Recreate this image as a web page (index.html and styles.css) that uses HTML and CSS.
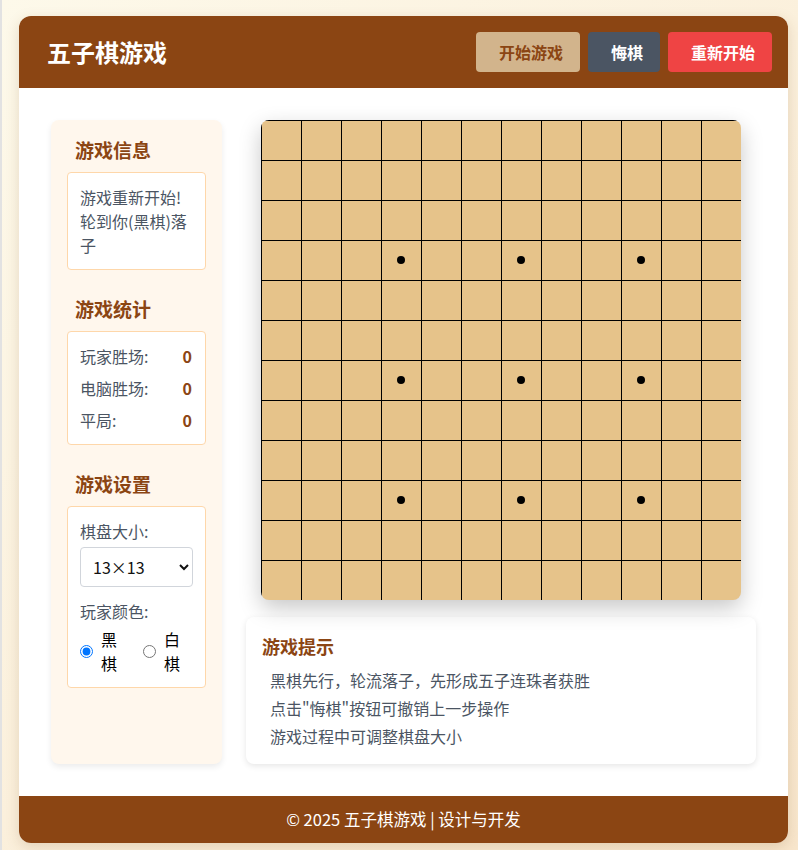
FILE: index.html
```html
<!DOCTYPE html>
<html lang="zh-CN">
<head>
<meta charset="utf-8">
<title>五子棋游戏</title>
<link rel="stylesheet" href="styles.css">
</head>
<body>
<div class="app">
  <header class="header">
    <h1 class="title">五子棋游戏</h1>
    <div class="actions">
      <button class="btn btn-start">开始游戏</button>
      <button class="btn btn-undo">悔棋</button>
      <button class="btn btn-restart">重新开始</button>
    </div>
  </header>
  <main class="main">
    <aside class="sidebar">
      <section class="section">
        <h2 class="section-title">游戏信息</h2>
        <div class="box info">游戏重新开始! 轮到你(黑棋)落子</div>
      </section>
      <section class="section">
        <h2 class="section-title">游戏统计</h2>
        <div class="box stats">
          <div class="stat"><span>玩家胜场:</span><b>0</b></div>
          <div class="stat"><span>电脑胜场:</span><b>0</b></div>
          <div class="stat"><span>平局:</span><b>0</b></div>
        </div>
      </section>
      <section class="section">
        <h2 class="section-title">游戏设置</h2>
        <div class="box settings">
          <label class="field-label">棋盘大小:</label>
          <select class="select">
            <option>13×13</option>
          </select>
          <label class="field-label color-label">玩家颜色:</label>
          <div class="radios">
            <label class="radio"><input type="radio" name="c" checked><span>黑棋</span></label>
            <label class="radio"><input type="radio" name="c"><span>白棋</span></label>
          </div>
        </div>
      </section>
    </aside>
    <div class="play">
      <div class="board">
        <span class="star s1"></span><span class="star s2"></span><span class="star s3"></span>
        <span class="star s4"></span><span class="star s5"></span><span class="star s6"></span>
        <span class="star s7"></span><span class="star s8"></span><span class="star s9"></span>
      </div>
      <div class="tips">
        <h3 class="tips-title">游戏提示</h3>
        <ul class="tips-list">
          <li>黑棋先行，轮流落子，先形成五子连珠者获胜</li>
          <li>点击"悔棋"按钮可撤销上一步操作</li>
          <li>游戏过程中可调整棋盘大小</li>
        </ul>
      </div>
    </div>
  </main>
  <footer class="footer">© 2025 五子棋游戏 | 设计与开发</footer>
</div>
</body>
</html>
```
FILE: styles.css
```css
* { box-sizing: border-box; }
html {
  background: linear-gradient(135deg, #fdf9ea 0%, #fbf0dc 50%, #f8e6cc 100%);
  min-height: 100%;
}
body {
  margin: 0;
  padding: 16px 10px 7px 17px;
  border-left: 2px solid #e2e2e2;
  font-family: "Noto Sans CJK SC", "Noto Sans", sans-serif;
  color: #333;
}
.app {
  background: #fff;
  border-radius: 12px;
  overflow: hidden;
  box-shadow: 0 4px 14px rgba(120, 80, 30, 0.18);
}
.header {
  background: #8b4513;
  height: 72px;
  padding: 0 16px 0 28px;
  display: flex;
  align-items: center;
  justify-content: space-between;
}
.title {
  margin: 0;
  color: #fff;
  font-size: 24px;
  font-weight: 700;
  line-height: 32px;
}
.actions { display: flex; gap: 8px; }
.btn {
  height: 40px;
  border: none;
  border-radius: 4px;
  padding: 0 17px 0 23px;
  font-family: inherit;
  font-size: 16px;
  font-weight: 700;
  line-height: 40px;
}
.btn-start { background: #d2b48c; color: #8b4513; }
.btn-undo { background: #4b5563; color: #fff; }
.btn-restart { background: #ef4444; color: #fff; }

.main {
  padding: 32px;
  display: grid;
  grid-template-columns: 171px 1fr;
  gap: 24px;
}
.sidebar {
  background: #fff7ed;
  border-radius: 8px;
  padding: 16px;
  box-shadow: 0 3px 6px rgba(0, 0, 0, 0.08);
}
.section + .section { margin-top: 25px; }
.section-title {
  margin: 0 0 8px;
  padding-left: 8px;
  color: #8b4513;
  font-size: 19px;
  font-weight: 700;
  line-height: 28px;
}
.box {
  background: #fff;
  border: 1px solid #fed7aa;
  border-radius: 4px;
  padding: 12px;
  font-size: 16px;
  line-height: 24px;
  color: #4b5563;
}
.stat {
  display: flex;
  justify-content: space-between;
  margin-bottom: 8px;
}
.stat:last-child { margin-bottom: 0; }
.stat b { color: #8b4513; font-size: 16px; padding-right: 1px; }
.field-label { display: block; margin-bottom: 4px; }
.select {
  display: block;
  width: 100%;
  height: 40px;
  border: 1px solid #d1d5db;
  border-radius: 4px;
  background: #fff;
  padding: 0 8px;
  font-family: inherit;
  font-size: 16px;
  color: #111;
}
.color-label { margin-top: 12px; }
.radios { display: flex; gap: 26px; }
.radio {
  display: flex;
  align-items: center;
  gap: 8px;
  color: #000;
  font-size: 16px;
  line-height: 24px;
}
.radio span { width: 16px; }
.radio input { margin: 0; width: 13px; height: 13px; }

.play {
  display: flex;
  flex-direction: column;
  align-items: center;
}
.board {
  position: relative;
  width: 480px;
  height: 480px;
  border-radius: 8px;
  overflow: hidden;
  background-color: #e6c38a;
  background-image:
    linear-gradient(to right, #000 1px, transparent 1px),
    linear-gradient(to bottom, #000 1px, transparent 1px);
  background-size: 40px 40px;
  box-shadow: 0 8px 22px rgba(0, 0, 0, 0.22);
}
.star {
  position: absolute;
  width: 8px;
  height: 8px;
  border-radius: 50%;
  background: #000;
}
.s1, .s2, .s3 { top: 136px; }
.s4, .s5, .s6 { top: 256px; }
.s7, .s8, .s9 { top: 376px; }
.s1, .s4, .s7 { left: 136px; }
.s2, .s5, .s8 { left: 256px; }
.s3, .s6, .s9 { left: 376px; }

.tips {
  align-self: stretch;
  margin-top: 17px;
  background: #fff;
  border-radius: 8px;
  padding: 16px;
  box-shadow: 0 2px 6px rgba(0, 0, 0, 0.1);
}
.tips-title {
  margin: 0 0 8px;
  color: #8b4513;
  font-size: 18px;
  font-weight: 700;
  line-height: 27px;
}
.tips-list {
  list-style: none;
  margin: 0;
  padding: 0 0 0 8px;
  color: #4b5563;
  font-size: 16px;
  line-height: 24px;
}
.tips-list li { margin-bottom: 4px; }
.tips-list li:last-child { margin-bottom: 0; }

.footer {
  background: #8b4513;
  color: #fff;
  text-align: center;
  font-size: 16.5px;
  line-height: 23px;
  padding: 12px;
}
```
